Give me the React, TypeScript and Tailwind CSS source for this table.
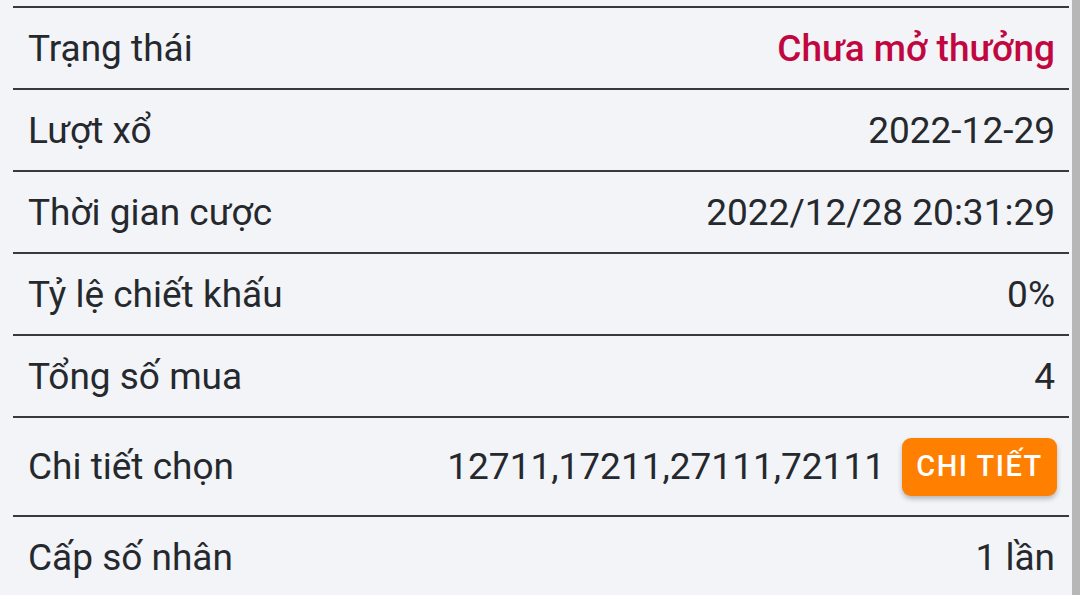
const rows: { label: string; value: string; tone?: "red"; detail?: boolean }[] = [
  { label: "Trạng thái", value: "Chưa mở thưởng", tone: "red" },
  { label: "Lượt xổ", value: "2022-12-29" },
  { label: "Thời gian cược", value: "2022/12/28 20:31:29" },
  { label: "Tỷ lệ chiết khấu", value: "0%" },
  { label: "Tổng số mua", value: "4" },
  { label: "Chi tiết chọn", value: "12711,17211,27111,72111", detail: true },
  { label: "Cấp số nhân", value: "1 lần" },
];

const InfoRow = ({ row }: { row: (typeof rows)[number] }) => {
  return (
    <div
      className={
        "flex items-center justify-between border-t-2 border-[#36393d] pl-[15px] pr-[14px] " +
        (row.detail ? "h-[99px]" : "h-[82px]")
      }
    >
      <div className="text-[#25292e]">{row.label}</div>
      <div className="flex items-center gap-[17px]">
        <div className={row.tone === "red" ? "font-medium text-[#c1073f]" : "text-[#25292e]"}>
          {row.value}
        </div>
        {row.detail && (
          <button className="mr-[-2px] flex h-[58px] w-[155px] items-center justify-center rounded-[9px] bg-[#ff7f00] text-[29px] font-medium tracking-[1.5px] text-white shadow-[0_3px_5px_rgba(0,0,0,0.25)]">
            CHI TIẾT
          </button>
        )}
      </div>
    </div>
  );
};

export default function App() {
  return (
    <div
      className="flex h-[595px] w-[1080px] overflow-hidden text-[37px] leading-none"
      style={{ fontFamily: "Roboto, 'Noto Sans', sans-serif" }}
    >
      <div className="flex-1 bg-[#f2f4f8] pl-[13px] pr-[3px] pt-[6px]">
        {rows.map((row) => (
          <InfoRow key={row.label} row={row} />
        ))}
      </div>
      <div className="w-[8px] bg-[#b7b7b7]" />
    </div>
  );
}
